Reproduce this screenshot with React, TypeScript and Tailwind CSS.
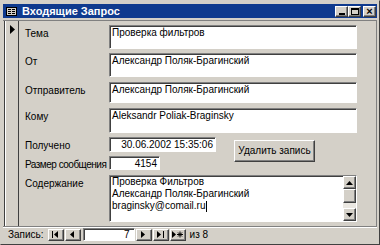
import React from 'react';

const raised =
  'border border-t-white border-l-white border-r-[#404040] border-b-[#404040] shadow-[inset_-1px_-1px_0_#808080]';
const sunken =
  'border border-t-[#808080] border-l-[#808080] border-r-white border-b-white shadow-[inset_1px_1px_0_#404040]';

const Field = ({ label, value, h, mt, w = 'w-[248px]', right = false, tight = false }: { label: string; value: string; h: string; mt: string; w?: string; right?: boolean; tight?: boolean }) => (
  <div className={`flex ${mt}`}>
    <div className={`w-[84px] pt-[3px] whitespace-nowrap ${tight ? 'tracking-[-0.5px]' : ''}`}>{label}</div>
    <div className={`${w} ${h} bg-white ${sunken} px-[2px] pt-[1px] leading-[12px] whitespace-nowrap ${right ? 'text-right' : ''}`}>{value}</div>
  </div>
);

const NavBtn = ({ children }: { children: React.ReactNode }) => (
  <div className={`w-[16px] h-[12px] bg-[#d4d0c8] ${raised} flex items-center justify-center`}>{children}</div>
);

const TitleBtn = ({ children }: { children: React.ReactNode }) => (
  <div className={`w-[13px] h-[11px] bg-[#d4d0c8] ${raised} flex items-center justify-center`}>{children}</div>
);

export default function App() {
  return (
    <div
      className="w-[380px] h-[245px] bg-[#d4d0c8] border border-t-[#d4d0c8] border-l-[#d4d0c8] border-r-[#404040] border-b-[#404040] p-[2px] flex flex-col text-[10px] leading-[12px] text-black overflow-hidden"
      style={{ fontFamily: '"Liberation Sans", Arial, sans-serif' }}
    >
      {/* title bar */}
      <div className="h-[14px] shrink-0 mt-[1px] bg-[#0f3a8e] flex items-center pl-[3px] pr-[1px]">
        <svg width="11" height="9" viewBox="0 0 11 9" className="mr-[5px]">
          <rect x="0.5" y="0.5" width="10" height="8" fill="#d4d0c8" stroke="#000" />
          <rect x="2" y="2" width="3" height="1" fill="#000" />
          <rect x="2" y="4" width="3" height="1" fill="#000" />
          <rect x="2" y="6" width="3" height="1" fill="#000" />
          <rect x="6" y="2" width="3" height="1" fill="#000" />
          <rect x="6" y="4" width="3" height="1" fill="#000" />
          <rect x="6" y="6" width="3" height="1" fill="#000" />
        </svg>
        <span className="text-white font-bold text-[11px] leading-none">Входящие Запрос</span>
        <div className="ml-auto flex items-center">
          <TitleBtn>
            <div className="w-[6px] h-[2px] bg-black mt-[5px]" />
          </TitleBtn>
          <TitleBtn>
            <div className="w-[8px] h-[7px] border border-black border-t-2" />
          </TitleBtn>
          <div className="ml-[2px]">
            <TitleBtn>
              <span className="text-[11px] leading-none font-bold">×</span>
            </TitleBtn>
          </div>
        </div>
      </div>

      {/* body */}
      <div className="flex-1 min-h-0 flex mt-[2px] border-t border-[#808080] overflow-hidden">
        <div className="w-[15px] border-l border-r border-[#404040] ml-[1px] bg-[#d4d0c8] shadow-[inset_1px_0_0_#fff]">
          <svg width="8" height="9" viewBox="0 0 8 9" className="ml-[4px] mt-[4px]">
            <path d="M1 0 L6 4.5 L1 9 Z" fill="#000" />
          </svg>
        </div>
        <div className="flex-1 pl-[6px] pt-[4px] border-r border-[#808080]">
          <Field label="Тема" value="Проверка фильтров" h="h-[24px]" mt="mt-0" />
          <Field label="От" value="Александр Поляк-Брагинский" h="h-[24px]" mt="mt-[4px]" />
          <Field label="Отправитель" value="Александр Поляк-Брагинский" h="h-[21px]" mt="mt-[5px]" />
          <Field label="Кому" value="Aleksandr Poliak-Braginsky" h="h-[25px]" mt="mt-[5px]" />
          <div className="flex">
            <div className="flex flex-col">
              <Field label="Получено" value="30.06.2002 15:35:06" h="h-[15px]" mt="mt-[4px]" w="w-[107px]" right />
              <Field label="Размер сообщения" value="4154" h="h-[14px]" mt="mt-[4px]" w="w-[51px]" right tight />
            </div>
            <div
              className={`ml-[18px] mt-[7px] w-[81px] h-[22px] bg-[#d4d0c8] ${raised} flex items-center justify-center whitespace-nowrap`}
            >
              Удалить запись
            </div>
          </div>
          <div className="flex mt-[4px]">
            <div className="w-[84px] pt-[3px]">Содержание</div>
            <div className={`w-[248px] h-[47px] bg-white ${sunken} flex`}>
              <div className="flex-1 pl-[2px] leading-[12px] whitespace-nowrap">
                <div>Проверка Фильтров</div>
                <div>Александр Поляк-Брагинский</div>
                <div>
                  braginsky@comail.ru<span className="inline-block w-px h-[11px] bg-black align-middle" />
                </div>
              </div>
              <div className="w-[13px] flex flex-col bg-[#ebe8e2]">
                <div className={`h-[13px] bg-[#d4d0c8] ${raised} flex items-center justify-center`}>
                  <svg width="7" height="4" viewBox="0 0 7 4"><path d="M3.5 0 L7 4 L0 4 Z" fill="#000" /></svg>
                </div>
                <div className={`h-[14px] bg-[#d4d0c8] ${raised}`} />
                <div className="flex-1" />
                <div className={`h-[13px] bg-[#d4d0c8] ${raised} flex items-center justify-center`}>
                  <svg width="7" height="4" viewBox="0 0 7 4"><path d="M0 0 L7 0 L3.5 4 Z" fill="#000" /></svg>
                </div>
              </div>
            </div>
          </div>
        </div>
      </div>

      {/* navigation */}
      <div className="h-[16px] shrink-0 flex items-center pl-[5px] border-t border-[#808080] shadow-[inset_0_1px_0_#fff]">
        <span className="mr-[4px]">Запись:</span>
        <NavBtn>
          <svg width="7" height="7" viewBox="0 0 7 7"><rect x="0" y="0" width="1" height="7" /><path d="M6 0 L2 3.5 L6 7 Z" /></svg>
        </NavBtn>
        <div className="ml-[1px]">
          <NavBtn>
            <svg width="5" height="7" viewBox="0 0 5 7"><path d="M4 0 L0 3.5 L4 7 Z" /></svg>
          </NavBtn>
        </div>
        <div className={`ml-[2px] w-[52px] h-[13px] bg-white ${sunken} text-right pr-[4px] leading-[11px]`}>7</div>
        <div className="ml-[1px]">
          <NavBtn>
            <svg width="5" height="7" viewBox="0 0 5 7"><path d="M0 0 L4 3.5 L0 7 Z" /></svg>
          </NavBtn>
        </div>
        <div className="ml-[1px]">
          <NavBtn>
            <svg width="7" height="7" viewBox="0 0 7 7"><path d="M0 0 L4 3.5 L0 7 Z" /><rect x="6" y="0" width="1" height="7" /></svg>
          </NavBtn>
        </div>
        <div className="ml-[1px]">
          <NavBtn>
            <svg width="11" height="7" viewBox="0 0 11 7"><path d="M0 0 L4 3.5 L0 7 Z" /><path d="M5 3.5 L11 3.5 M8 0.5 L8 6.5 M6 1.5 L10 5.5 M10 1.5 L6 5.5" stroke="#000" strokeWidth="1" /></svg>
          </NavBtn>
        </div>
        <span className="ml-[4px]">из 8</span>
      </div>
    </div>
  );
}
